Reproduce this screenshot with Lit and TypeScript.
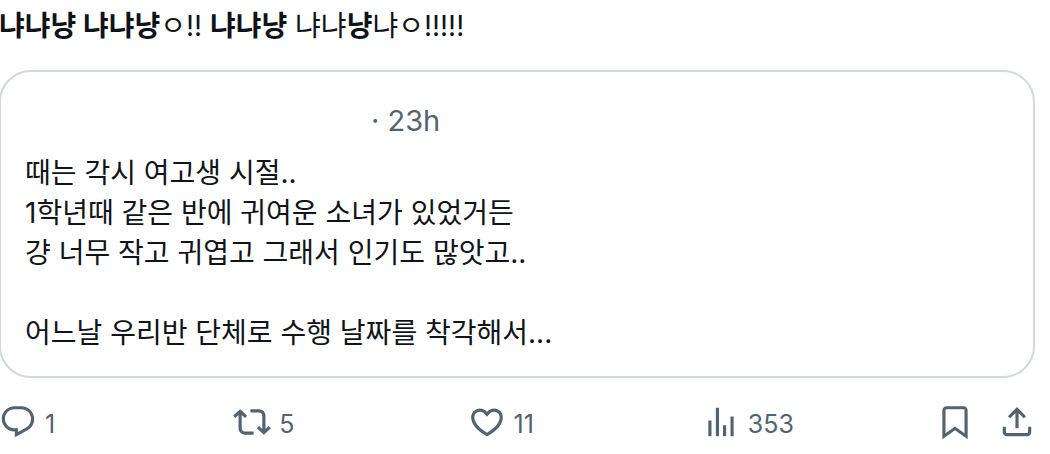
import { LitElement, html, css, svg } from "lit";
import { customElement, property } from "lit/decorators.js";

const ICONS: Record<string, string> = {
  reply:
    "M1.751 10c0-4.42 3.584-8 8.005-8h4.366c4.49 0 8.129 3.64 8.129 8.13 0 2.96-1.607 5.68-4.196 7.11l-8.054 4.46v-3.69h-.067c-4.49.1-8.183-3.51-8.183-8.01zm8.005-6c-3.317 0-6.005 2.69-6.005 6 0 3.37 2.77 6.08 6.138 6.01l.351-.01h1.761v2.3l5.087-2.81c1.951-1.08 3.163-3.13 3.163-5.36 0-3.39-2.744-6.13-6.129-6.13H9.756z",
  repost:
    "M4.5 3.88l4.432 4.14-1.364 1.46L5.5 7.55V16c0 1.1.896 2 2 2H13v2H7.5c-2.209 0-4-1.79-4-4V7.55L1.432 9.48.068 8.02 4.5 3.88zM16.5 6H11V4h5.5c2.209 0 4 1.79 4 4v8.45l2.068-1.93 1.364 1.46-4.432 4.14-4.432-4.14 1.364-1.46 2.068 1.93V8c0-1.1-.896-2-2-2z",
  like:
    "M16.697 5.5c-1.222-.06-2.679.51-3.89 2.16l-.805 1.09-.806-1.09C9.984 6.01 8.526 5.44 7.304 5.5c-1.243.07-2.349.78-2.91 1.91-.552 1.12-.633 2.78.479 4.82 1.074 1.97 3.257 4.27 7.129 6.61 3.87-2.34 6.052-4.64 7.126-6.61 1.111-2.04 1.03-3.7.477-4.82-.561-1.13-1.666-1.84-2.908-1.91zm4.187 7.69c-1.351 2.48-4.001 5.12-8.379 7.67l-.503.3-.504-.3c-4.379-2.55-7.029-5.19-8.382-7.67-1.36-2.5-1.41-4.86-.514-6.67.887-1.79 2.647-2.91 4.601-3.01 1.651-.09 3.368.56 4.798 2.01 1.429-1.45 3.146-2.1 4.796-2.01 1.954.1 3.714 1.22 4.601 3.01.896 1.81.846 4.17-.514 6.67z",
  views: "M8.75 21V3h2v18h-2zM18 21V8.5h2V21h-2zM4 21l.004-10h2L6 21H4zm9.248 0v-7h2v7h-2z",
  bookmark:
    "M4 4.5C4 3.12 5.119 2 6.5 2h11C18.881 2 20 3.12 20 4.5v18.44l-8-5.71-8 5.71V4.5zM6.5 4c-.276 0-.5.22-.5.5v14.56l6-4.29 6 4.29V4.5c0-.28-.224-.5-.5-.5h-11z",
  share:
    "M12 2.59l5.7 5.7-1.41 1.42L13 6.41V16h-2V6.41l-3.3 3.3-1.41-1.42L12 2.59zM21 15l-.02 3.51c0 1.38-1.12 2.49-2.5 2.49H5.5C4.11 21 3 19.88 3 18.5V15h2v3.5c0 .28.22.5.5.5h12.98c.28 0 .5-.22.5-.5L19 15h2z",
};

@customElement("post-action")
class PostAction extends LitElement {
  @property() icon = "reply";
  @property() label = "";
  @property() count = "";

  static styles = css`
    :host {
      display: block;
    }
    .action {
      display: flex;
      align-items: center;
      gap: 8px;
      margin: 0;
      padding: 0;
      border: 0;
      background: none;
      color: #536471;
      font: 25px/32px Inter, "Liberation Sans", sans-serif;
      cursor: pointer;
    }
    .icon {
      display: block;
      width: 38px;
      height: 38px;
      fill: currentColor;
    }
    .count {
      padding-top: 3px;
    }
  `;

  render() {
    return html`<button class="action" type="button" aria-label=${`${this.count} ${this.label}`.trim()}>
      <svg class="icon" viewBox="0 0 24 24" aria-hidden="true">${svg`<path d=${ICONS[this.icon]}></path>`}</svg>
      ${this.count ? html`<span class="count">${this.count}</span>` : null}
    </button>`;
  }
}

@customElement("quoted-post")
class QuotedPost extends LitElement {
  static styles = css`
    :host {
      display: block;
      border: 2px solid #cfd9de;
      border-radius: 32px;
      padding: 29px 24px 23px;
    }
    .header {
      display: flex;
      gap: 8px;
      color: #536471;
      font: 29px/40px Inter, "Liberation Sans", sans-serif;
    }
    .author {
      flex: 0 1 338px;
    }
    .text {
      margin: 12px 0 0;
      white-space: pre-line;
      color: #0f1419;
      font: 28px/40px Inter, "Noto Sans CJK KR", sans-serif;
    }
  `;

  render() {
    return html`
      <div class="header"><span class="author"></span><span>· <time>23h</time></span></div>
      <p class="text">${"때는 각시 여고생 시절..\n1학년때 같은 반에 귀여운 소녀가 있었거든\n걍 너무 작고 귀엽고 그래서 인기도 많앗고..\n\n어느날 우리반 단체로 수행 날짜를 착각해서..."}</p>
    `;
  }
}

@customElement("app-root")
class AppRoot extends LitElement {
  static styles = css`
    :host {
      display: block;
      background: #fff;
      color: #0f1419;
    }
    .post {
      margin: 0 15px 0 -1px;
      padding-top: 6px;
    }
    .text {
      margin: 0 0 24px;
      font: 28px/40px Inter, "Noto Sans CJK KR", sans-serif;
    }
    .actions {
      display: flex;
      margin: 25px -1px 0 0;
    }
    .stat {
      flex: 1;
    }
    .tools {
      display: flex;
      gap: 24px;
    }
  `;

  render() {
    return html`
      <article class="post">
        <p class="text"><b>냐냐냥 냐냐냥</b>ㅇ!! <b>냐냐냥</b> 냐냐<b>냥</b>냐ㅇ!!!!!</p>
        <quoted-post></quoted-post>
        <div class="actions">
          <post-action class="stat" icon="reply" label="replies" count="1"></post-action>
          <post-action class="stat" icon="repost" label="reposts" count="5"></post-action>
          <post-action class="stat" icon="like" label="likes" count="11"></post-action>
          <post-action class="stat" icon="views" label="views" count="353"></post-action>
          <div class="tools">
            <post-action icon="bookmark" label="Bookmark"></post-action>
            <post-action icon="share" label="Share"></post-action>
          </div>
        </div>
      </article>
    `;
  }
}
